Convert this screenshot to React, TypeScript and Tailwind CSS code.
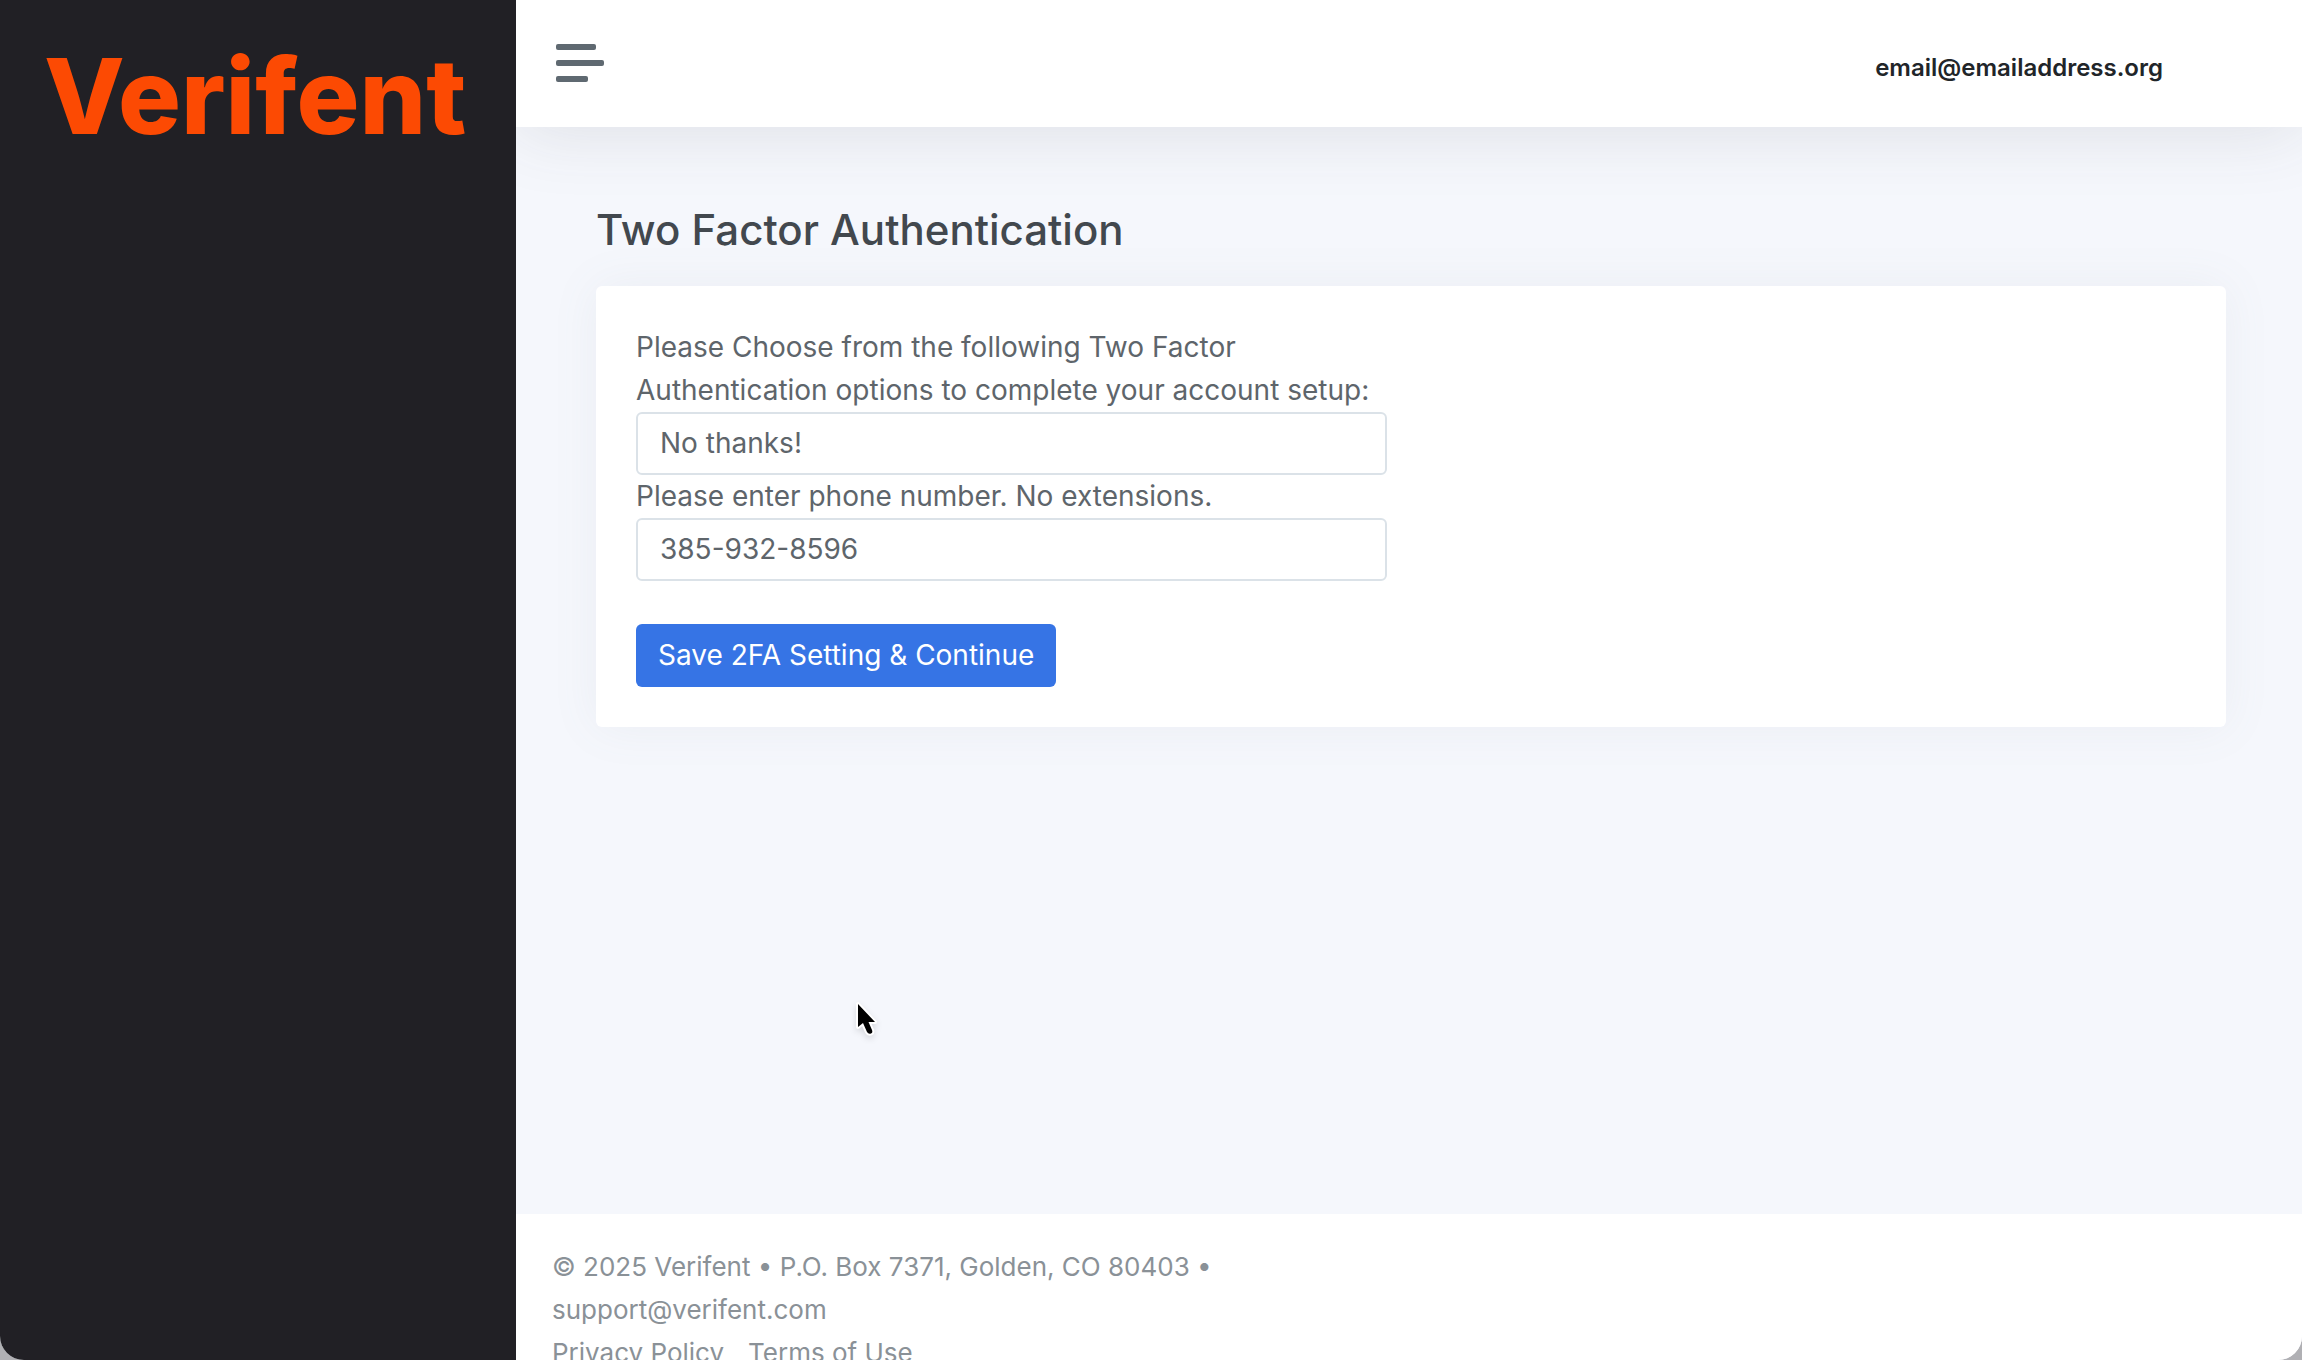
import React, { useState } from 'react';

const Field = ({ label, id, children }: any) => (
    <div className="flex flex-col">
        <label htmlFor={id} className="leading-[43px]">{label}</label>
        {children}
    </div>
);

const controlClass = 'w-full h-[63px] px-[22px] pb-0.5 border-2 border-[#dbe2e8] rounded-md bg-white text-[#5e656b] appearance-none focus:outline-none';

const Cursor = () => (
    <svg className="absolute left-[848px] top-[996px] w-[36px] h-[46px] drop-shadow-md" viewBox="0 0 36 46" aria-hidden="true">
        <path
            d="M10 8 V31 L15 27 L19 36 Q20.500 38.500 23 37.500 Q25 36.500 24 34 L20.500 26 H27 Z"
            fill="#000" stroke="#fff" strokeWidth="4" strokeLinejoin="round" paintOrder="stroke"
        />
    </svg>
);

const Sidebar = () => (
    <aside className="relative z-20 w-[516px] shrink-0 bg-[#212025] px-11 pt-6">
        <a href="#" className="block text-[105px] leading-[144px] font-extrabold text-[#fc4a03]">Verifent</a>
    </aside>
);

const Topbar = () => (
    <header className="relative z-10 flex items-center justify-between h-[127px] shrink-0 pl-10 pr-[139px] bg-white shadow-[0_4px_70px_rgba(70,70,75,0.13)]">
        <button type="button" aria-label="Menu" className="flex flex-col gap-2.5 pb-0.5">
            <span className="w-10 h-1.5 rounded-xs bg-[#5f6971]" />
            <span className="w-12 h-1.5 rounded-xs bg-[#5f6971]" />
            <span className="w-8 h-1.5 rounded-xs bg-[#5f6971]" />
        </button>
        <span className="pt-2 text-[24px] font-semibold text-[#212529]">email@emailaddress.org</span>
    </header>
);

const TwoFactorForm = () => {
    const [option, setOption] = useState('none');
    const [phone, setPhone] = useState('385-932-8596');

    return (
        <form className="w-1/2 pr-6" onSubmit={(e) => e.preventDefault()}>
            <Field id="option" label="Please Choose from the following Two Factor Authentication options to complete your account setup:">
                <select id="option" value={option} onChange={(e) => setOption(e.target.value)} className={controlClass}>
                    <option value="none">No thanks!</option>
                    <option value="sms">Text message</option>
                </select>
            </Field>
            <Field id="phone" label="Please enter phone number. No extensions.">
                <input id="phone" type="tel" value={phone} onChange={(e) => setPhone(e.target.value)} className={controlClass} />
            </Field>
            <button type="submit" className="mt-[43px] h-[63px] px-[22px] pb-0.5 rounded-md bg-[#3674e5] text-white">
                Save 2FA Setting &amp; Continue
            </button>
        </form>
    );
};

const Footer = () => (
    <footer className="h-[146px] shrink-0 overflow-hidden px-9 pt-[31px] bg-white text-[26px] text-[#8a9197] leading-[43px]">
        <div className="w-1/2">
            <p>© 2025 Verifent • P.O. Box 7371, Golden, CO 80403 • <a href="#">support@verifent.com</a></p>
            <div className="flex gap-6">
                <a href="#">Privacy Policy</a>
                <a href="#">Terms of Use</a>
            </div>
        </div>
    </footer>
);

export default function App() {
    return (
        <div className="relative h-screen overflow-hidden bg-[#b0b0b4] text-[28px] text-[#5e656b] font-[Inter,sans-serif]">
            <div className="flex h-full overflow-hidden rounded-b-3xl bg-[#f5f7fc]">
                <Sidebar />
                <div className="flex flex-col flex-1 min-w-0">
                    <Topbar />
                    <main className="flex-1 pl-20 pr-[76px] pt-[73px]">
                        <h1 className="text-[42px] leading-[60px] mb-[26px] font-medium text-[#42484e]">Two Factor Authentication</h1>
                        <section className="p-10 rounded-md bg-white shadow-[0_0_48px_rgba(120,125,135,0.08)]">
                            <TwoFactorForm />
                        </section>
                    </main>
                    <Footer />
                </div>
            </div>
            <Cursor />
        </div>
    );
}
